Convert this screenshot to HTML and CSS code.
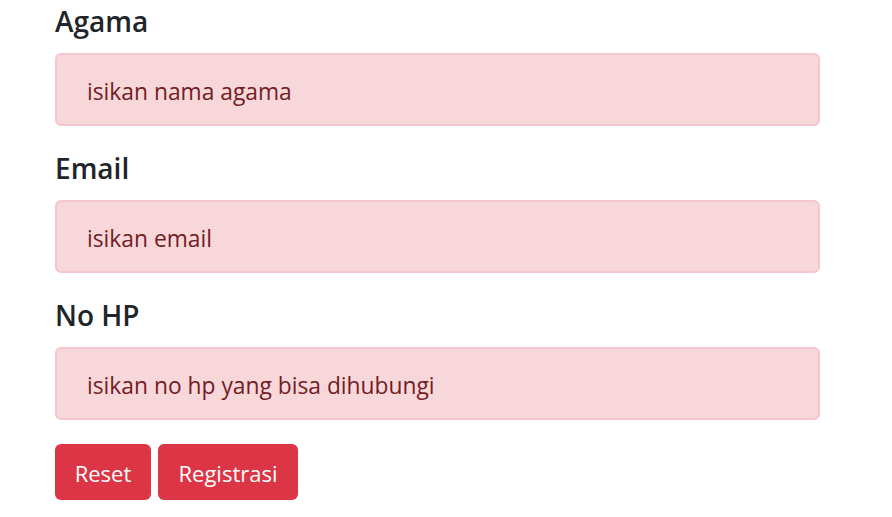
FILE: index.html
```html
<!DOCTYPE html>
<html>
<head>
<meta charset="utf-8">
<link rel="stylesheet" href="styles.css">
</head>
<body>
<form class="form">
  <div class="group">
    <label class="label">Agama</label>
    <div class="field">isikan nama agama</div>
  </div>
  <div class="group">
    <label class="label">Email</label>
    <div class="field">isikan email</div>
  </div>
  <div class="group">
    <label class="label">No HP</label>
    <div class="field">isikan no hp yang bisa dihubungi</div>
  </div>
  <div class="actions">
    <button type="reset" class="btn btn-reset">Reset</button>
    <button type="button" class="btn btn-reg">Registrasi</button>
  </div>
</form>
</body>
</html>
```
FILE: styles.css
```css
html, body {
  margin: 0;
  padding: 0;
  background: #fff;
}
body {
  font-family: "Open Sans", "Noto Sans", sans-serif;
  color: #212529;
}
.form {
  padding: 3px 0 0 55px;
  width: 765px;
}
.group {
  margin-bottom: 24px;
}
.label {
  display: block;
  font-size: 28px;
  font-weight: 600;
  line-height: 36px;
  margin-bottom: 14px;
  padding-top: 1px;
  margin-top: -1px;
}
.field {
  box-sizing: border-box;
  height: 73px;
  border: 2px solid #f5c6cb;
  background: #f8d7da;
  color: #721c24;
  border-radius: 6px;
  padding: 3px 30px 0;
  display: flex;
  align-items: center;
  font-size: 22.8px;
}
.actions {
  display: flex;
  gap: 7px;
  margin-top: 3px;
}
.btn {
  height: 56px;
  border: 0;
  border-radius: 6px;
  background: #dc3545;
  color: #fff;
  font-family: "Open Sans", "Noto Sans", sans-serif;
  font-size: 22px;
  padding: 2px 0 0;
}
.btn-reset { width: 96px; }
.btn-reg { width: 140px; }
```
